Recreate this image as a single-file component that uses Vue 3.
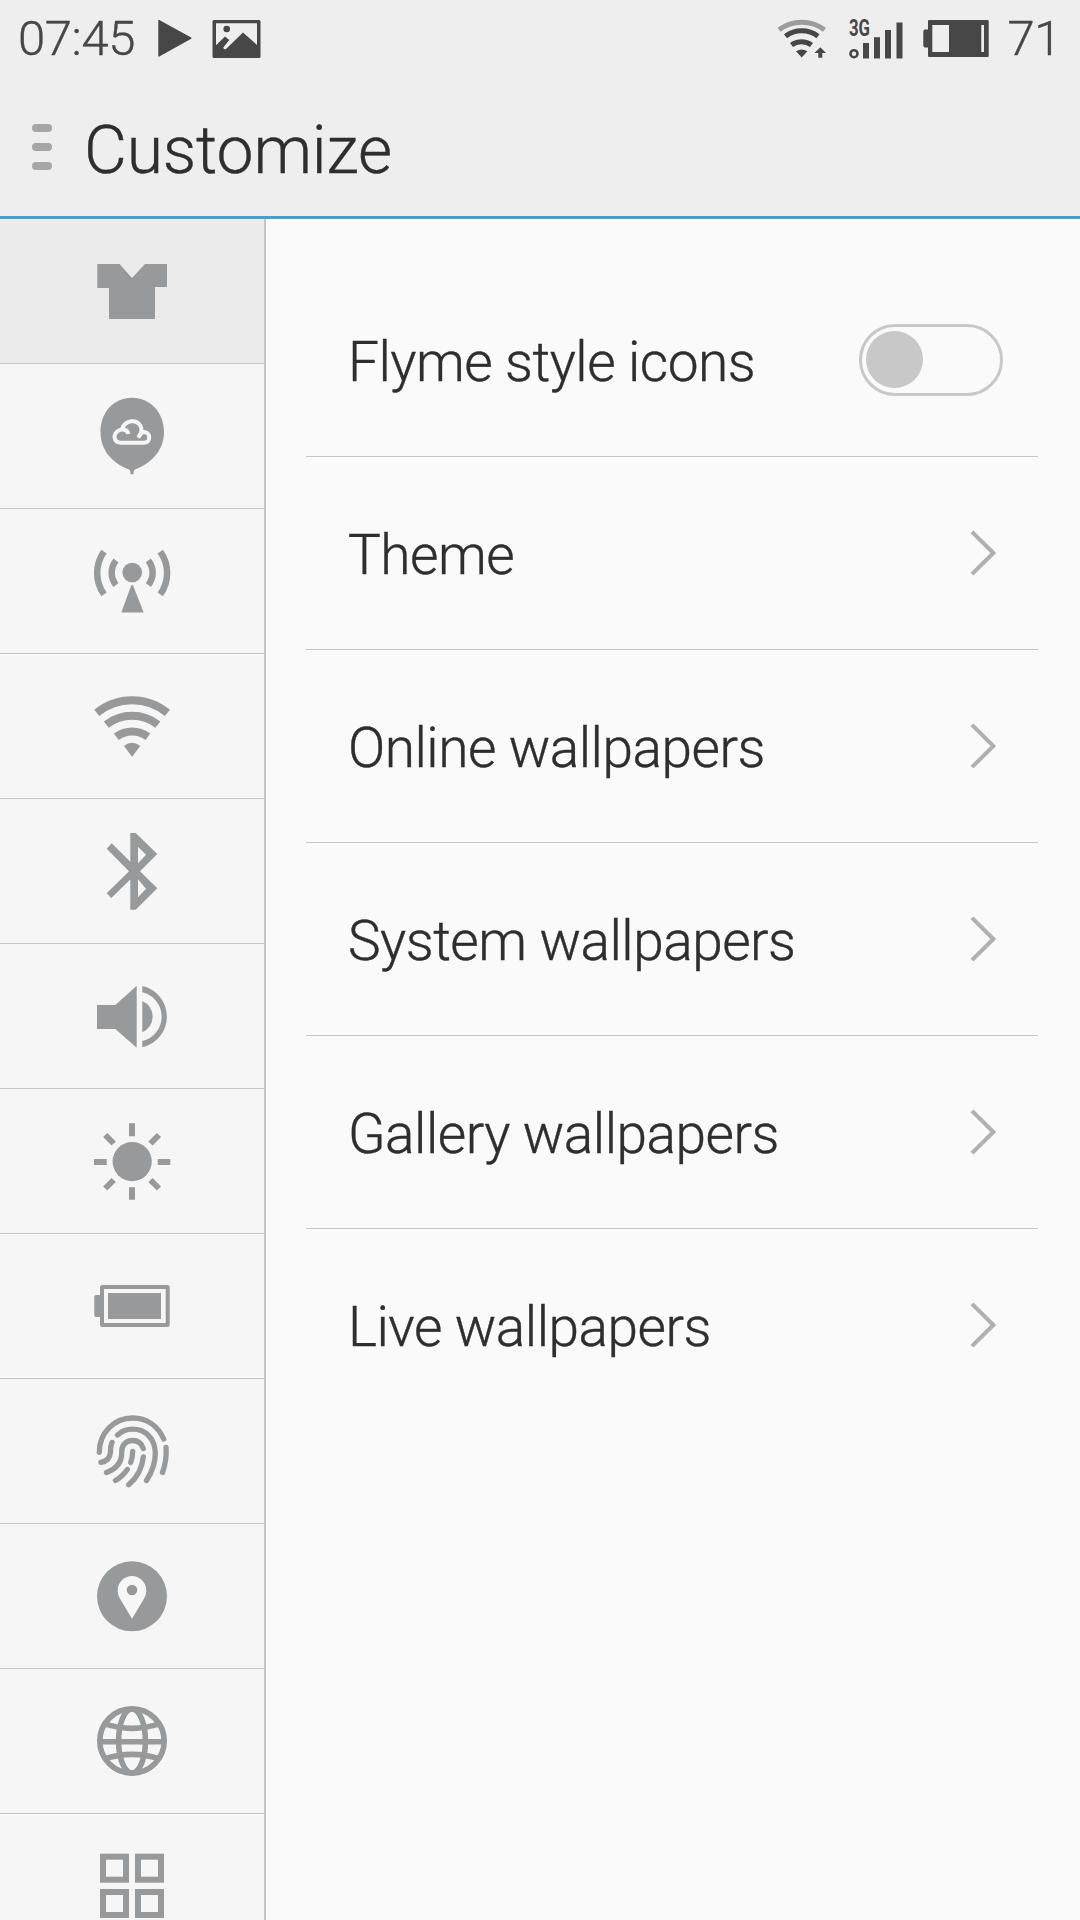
<script setup>
import { ref } from 'vue'

const active = ref('theme')
const flymeIcons = ref(false)

// left column, top to bottom
const tabs = [
  'theme',
  'balloon',
  'network',
  'wifi',
  'bluetooth',
  'sound',
  'brightness',
  'battery',
  'fingerprint',
  'location',
  'language',
  'apps'
]

const links = [
  'Theme',
  'Online wallpapers',
  'System wallpapers',
  'Gallery wallpapers',
  'Live wallpapers'
]
</script>

<template>
  <div class="screen">
    <header class="header">
      <div class="status">
        <span class="status-text">07:45</span>
        <svg class="st-play" viewBox="0 0 34 40" width="34" height="40">
          <path d="M.3 1.5Q.3.5 1.3 1L33.2 18.6Q34 19.2 33.2 19.8L1.3 37.4Q.3 38 .3 37Z" />
        </svg>
        <svg class="st-image" viewBox="0 0 49 40" width="49" height="40">
          <path
            fill-rule="evenodd"
            d="M2 1H47Q48.5 1 48.5 2.5V37.5Q48.5 39 47 39H2Q.5 39 .5 37.500V2.5Q.5 1 2 1ZM4 4.300V26.300L13 17.500L17.300 21L11.300 28.500Q11.500 31 14 30L31 13.500L45 26V4.300Z"
          />
          <circle cx="14.700" cy="10" r="3.300" />
        </svg>
        <div class="status-right">
          <svg class="st-wifi" viewBox="0 0 50 40" width="50" height="40">
            <path class="faint" d="M2 10.700A38 38 0 0 1 47.500 10.700" />
            <path class="arc" d="M8.500 17.300A27 27 0 0 1 41 17.300" />
            <path class="arc" d="M14.500 26A17 17 0 0 1 34.500 26" />
            <path d="M19 32.300Q24.700 28.500 30.400 32.300L24.700 38.500Z" />
            <path d="M43.300 28.300L49 34H45.300V38.700H41.300V34H37.500Z" />
          </svg>
          <svg class="st-signal" viewBox="0 0 55 42" width="55" height="42">
            <text x="0" y="18.300" textLength="21" lengthAdjust="spacingAndGlyphs">3G</text>
            <circle class="ring" cx="5" cy="35.700" r="3.500" />
            <path d="M14 25H20V40.500H14ZM25 19.300H31V40.500H25ZM36 12H42V40.500H36ZM47.500 4.500H53.500V40.500H47.500Z" />
          </svg>
          <svg class="st-battery" viewBox="0 0 66 40" width="66" height="40">
            <path
              fill-rule="evenodd"
              d="M6 1H64.500Q65.700 1 65.700 2V37Q65.700 38 64.500 38H6Q5 38 5 37V28.500H1.500L.3 27V12L1.500 10.500H5V2Q5 1 6 1ZM9.300 6V33H26V6ZM58.300 6V33H61V6Z"
            />
          </svg>
          <span class="status-text">71</span>
        </div>
      </div>
      <div class="title-row">
        <div class="menu"><i></i><i></i><i></i></div>
        <h1>Customize</h1>
      </div>
    </header>

    <div class="body">
      <nav class="sidebar">
        <div
          v-for="tab in tabs"
          :key="tab"
          class="tab"
          :class="{ active: active === tab }"
          @click="active = tab"
        >
          <svg class="icon" viewBox="0 0 80 80">
            <path v-if="tab === 'theme'" d="M5.300 13H27.500L40 27L53 13H75V36H63V68H17V37H5.300Z" />

            <g v-else-if="tab === 'balloon'">
              <path
                d="M40 1.700C58 1.700 72 16 72 36C72 54 60 67 43 73.500C41.500 74.500 41.500 76 41.500 78.300H38.500C38.500 76 38.500 74.500 37 73.500C20 67 8.500 54 8.500 36C8.500 16 22 1.700 40 1.700Z"
              />
              <path
                class="cloud"
                d="M36.300 38C35.500 33.500 30 32.300 26.500 34.700C20 39 22 46.700 29 46.700H52C59 46.700 59 36.300 52 36C49.500 36.300 47.500 38 46.500 41.500C49.500 37 50.500 33.500 48.500 30C44.500 23 33.500 23.500 30 33"
              />
            </g>

            <g v-else-if="tab === 'network'">
              <circle cx="40.200" cy="31.500" r="9.800" />
              <path d="M39.300 44.300H41L51.700 71.600H29.300Z" />
              <g class="line" stroke-width="6.500">
                <path d="M12 10.600A37 37 0 0 0 12 53.400M24 19.500A19.500 19.500 0 0 0 24 44" />
                <path d="M68.300 10.600A37 37 0 0 1 68.300 53.400M56.300 19.500A19.500 19.500 0 0 1 56.300 44" />
              </g>
            </g>

            <g v-else-if="tab === 'wifi'">
              <g class="line" stroke-width="8">
                <path d="M4.800 26.800A55.500 55.500 0 0 1 75.400 26.800" />
                <path d="M14.300 38.700A42 42 0 0 1 65.900 38.700" />
                <path d="M24.300 50.800A26 26 0 0 1 55.900 50.800" />
              </g>
              <path d="M32 60Q40 53.500 48.300 60L40.100 70.700Z" />
            </g>

            <path
              v-else-if="tab === 'bluetooth'"
              fill-rule="evenodd"
              d="M38.300 2H43.700L65.300 23L48 40.300L65.300 57.300L43.700 78.700H38.300V48.500L19.300 67L14.700 62.300L37 40.300L14.700 17.700L19.700 12.300L38.300 30.700ZM46 15.700V32.300L54 23.700ZM46 48.300V66.300L54 57.700Z"
            />

            <path
              v-else-if="tab === 'sound'"
              d="M5 29H23.300L44.700 9.700V71.700L23.300 53H5ZM50.300 25A17 17 0 0 1 50.300 56.300ZM50.300 10A31.400 31.400 0 0 1 50.300 71.300V65A25 25 0 0 0 50.300 16.300Z"
            />

            <g v-else-if="tab === 'brightness'">
              <circle cx="40.200" cy="40.600" r="19.600" />
              <path
                class="line"
                stroke-width="6"
                d="M40 2.300V15.300M40 66.300V78.700M2 41H14.700M65.700 41H78.300M13.200 14L21.700 22.500M67 14L58.500 22.500M13.200 67.500L21.700 59M67 67.500L58.500 59"
              />
            </g>

            <g v-else-if="tab === 'battery'">
              <rect class="line" x="10" y="21" width="65.700" height="38" rx=".5" stroke-width="4" />
              <rect x="16" y="27" width="53" height="26" />
              <path d="M9 29H4Q2.300 29 2.300 31V49Q2.300 51 4 51H9Z" />
            </g>

            <g v-else-if="tab === 'fingerprint'" class="line round" stroke-width="5.300">
              <path d="M7.300 41.300C7.300 22 22 7 40.500 7C55 7 66 15 71.700 28" />
              <path d="M74 36.500Q75 49 70.500 61.500" />
              <path d="M25.500 24Q32 18.200 40.500 18.200C54 18.200 63 28 63.300 42C63.500 53 60 61 54.500 69.500" />
              <path d="M51.300 37.500C49.500 32 45 29.500 40.500 29.500C34 29.500 29.500 34 29.700 41C30 52 24 58 14.500 61.500" />
              <path d="M20 31.500C18 36 18.700 38 18.500 41C18 47 15 50.500 8.900 51.300" />
              <path d="M40.700 40.500Q40.500 47 38.700 51.500" />
              <path d="M35.300 58.500Q30 66 23.500 69.500" />
              <path d="M51.300 46C50 58 46 66 36.700 73.700" />
            </g>

            <path
              v-else-if="tab === 'location'"
              fill-rule="evenodd"
              d="M40 5.300A35 35 0 1 1 40 75.300A35 35 0 1 1 40 5.300ZM40 20C32 20 25.700 26.500 25.700 34.500C25.700 38 27 41 28.500 43.500L40 62.800L51.500 43.500C53 41 54.300 38 54.300 34.500C54.300 26.500 48 20 40 20ZM40 28.700A5.300 5.300 0 1 1 40 39.300A5.300 5.300 0 1 1 40 28.700Z"
            />

            <g v-else-if="tab === 'language'" class="line" stroke-width="5.600">
              <circle cx="40" cy="40" r="32.200" />
              <ellipse cx="40" cy="40" rx="13.400" ry="32" />
              <path d="M6 40.700H74M12 22.700Q40 32 68 22.700M12 58Q40 48.700 68 58" />
            </g>

            <g v-else class="line" stroke-width="6">
              <rect x="11" y="10.700" width="23" height="23" />
              <rect x="46" y="10.700" width="23" height="23" />
              <rect x="11" y="46" width="23" height="23" />
              <rect x="46" y="46" width="23" height="23" />
            </g>
          </svg>
        </div>
      </nav>

      <main class="content">
        <div class="row">
          <span class="label">Flyme style icons</span>
          <div class="switch" :class="{ on: flymeIcons }" @click="flymeIcons = !flymeIcons">
            <div class="thumb"></div>
          </div>
        </div>
        <div v-for="link in links" :key="link" class="row">
          <span class="label">{{ link }}</span>
          <svg class="chevron" viewBox="0 0 26 48" width="26" height="48">
            <path d="M2 2.800L23.300 24L2 45.200" />
          </svg>
        </div>
      </main>
    </div>
  </div>
</template>

<style>
body {
  background: #fafafa;
}
</style>

<style scoped>
.screen {
  width: 1080px;
  height: 1920px;
  overflow: hidden;
  display: flex;
  flex-direction: column;
  font-family: Roboto, sans-serif;
  font-weight: 300;
  color: #2e2e2e;
  background: #fafafa;
}

/* slightly heavier than plain Light */
.status-text,
.label,
h1 {
  -webkit-text-stroke: 0.4px currentColor;
}

/* --- HEADER --- */
.header {
  flex: none;
  box-sizing: border-box;
  height: 219px;
  background: #eeeeee;
  border-bottom: 3px solid #41a0d5;
}

.status {
  display: flex;
  align-items: center;
  height: 76px;
  padding: 1px 19px 0 18px;
  fill: #474747;
  color: #474747;
}

.status-text {
  font-size: 49px;
  line-height: 76px;
  letter-spacing: -0.4px;
}

.st-play {
  margin-left: 23px;
}

.st-image {
  margin-left: 20px;
}

.status-right {
  display: flex;
  align-items: center;
  margin-left: auto;
}

.st-wifi .arc,
.st-wifi .faint {
  fill: none;
  stroke: #474747;
  stroke-width: 5;
}

.st-wifi .faint {
  stroke: #9c9c9c;
}

.st-signal {
  margin-left: 22px;
  overflow: visible;
}

.st-signal text {
  font-size: 23px;
  font-weight: 700;
}

.st-signal .ring {
  fill: none;
  stroke: #474747;
  stroke-width: 2.6;
}

.st-battery {
  margin: 0 18px 0 19px;
}

.title-row {
  display: flex;
  align-items: center;
  height: 140px;
  padding-left: 32px;
}

.menu {
  display: flex;
  flex-direction: column;
  gap: 11px;
  width: 20px;
  margin-right: 32px;
}

.menu i {
  height: 8px;
  border-radius: 4px;
  background: #a6a6a6;
}

h1 {
  margin: 0;
  padding-top: 8px;
  font-size: 66px;
  font-weight: 300;
  line-height: 132px;
  letter-spacing: -0.15px;
}

/* --- SIDEBAR --- */
.body {
  flex: 1;
  min-height: 0;
  display: flex;
}

.sidebar {
  width: 264px;
  border-right: 2px solid #c6c6c6;
  background: #f6f6f6;
  overflow: hidden;
}

.tab {
  display: flex;
  align-items: center;
  justify-content: center;
  height: 144px;
  border-bottom: 1px solid #c6c6c6;
}

.tab.active {
  background: #ebebeb;
}

.icon {
  width: 80px;
  height: 80px;
  fill: #98999a;
}

.icon .line {
  fill: none;
  stroke: #98999a;
}

.icon .round {
  stroke-linecap: round;
}

.icon .cloud {
  fill: none;
  stroke: #f6f6f6;
  stroke-width: 4;
}

/* --- SETTINGS LIST --- */
.content {
  flex: 1;
  padding: 45px 42px 0 40px;
}

.row {
  box-sizing: border-box;
  display: flex;
  align-items: center;
  justify-content: space-between;
  height: 193px;
  padding: 0 42px;
  border-bottom: 1px solid #c6c6c6;
}

.row:last-child {
  border-bottom-color: transparent;
}

.label {
  padding-top: 4px;
  font-size: 55px;
  letter-spacing: -0.5px;
}

.switch {
  box-sizing: border-box;
  width: 144px;
  height: 72px;
  margin-right: -7px;
  padding: 4px;
  border: 3px solid #c8c8c8;
  border-radius: 36px;
}

.thumb {
  width: 57px;
  height: 57px;
  border-radius: 50%;
  background: #c8c8c8;
}

.switch.on .thumb {
  margin-left: auto;
}

.chevron {
  fill: none;
  stroke: #b0b0b0;
  stroke-width: 4;
}
</style>
